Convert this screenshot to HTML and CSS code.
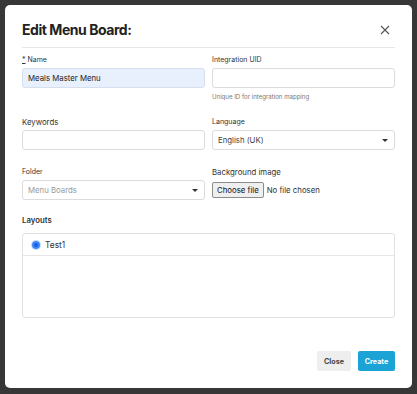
FILE: index.html
```html
<!DOCTYPE html>
<html lang="en">
<head>
<meta charset="utf-8">
<title>Edit Menu Board</title>
<link rel="stylesheet" href="styles.css">
</head>
<body>
<div class="modal">
  <div class="modal-header">
    <h1 class="title">Edit Menu Board:</h1>
    <svg class="close-x" width="10" height="10" viewBox="0 0 10 10"><path d="M1 1L9 9M9 1L1 9" stroke="#555" stroke-width="1.1" fill="none"/></svg>
  </div>
  <form class="form">
    <div class="field">
      <label class="label"><span class="req">*</span> Name</label>
      <div class="input autofill">Meals Master Menu</div>
    </div>
    <div class="field">
      <label class="label">Integration UID</label>
      <div class="input"></div>
      <div class="help">Unique ID for integration mapping</div>
    </div>
    <div class="field">
      <label class="label label-lg">Keywords</label>
      <div class="input"></div>
    </div>
    <div class="field">
      <label class="label">Language</label>
      <div class="input select">English (UK)<span class="caret"></span></div>
    </div>
    <div class="field row3">
      <label class="label">Folder</label>
      <div class="input select placeholder">Menu Boards<span class="caret"></span></div>
    </div>
    <div class="field row3">
      <label class="label label-lg">Background image</label>
      <div class="file"><span class="file-btn">Choose file</span><span class="file-text">No file chosen</span></div>
    </div>
    <div class="field full">
      <label class="label label-lg label-bold">Layouts</label>
      <div class="layouts">
        <div class="layout-row"><span class="radio"></span><span class="layout-name">Test1</span></div>
      </div>
    </div>
  </form>
  <div class="footer">
    <button class="btn btn-close" type="button">Close</button>
    <button class="btn btn-create" type="button">Create</button>
  </div>
</div>
</body>
</html>
```

FILE: styles.css
```css
* { box-sizing: border-box; }
html, body { margin: 0; }
body {
  width: 417px;
  height: 394px;
  background: #373737;
  padding: 5px 5px 0 5px;
  font-family: Inter, "Noto Sans", sans-serif;
  color: #333;
  overflow: hidden;
}
.modal {
  width: 407px;
  height: 383px;
  background: #fff;
  border-radius: 5px;
  padding: 0 17px 17px 17px;
  display: flex;
  flex-direction: column;
}
.modal-header {
  display: flex;
  align-items: center;
  justify-content: space-between;
  padding: 15px 0 7px 0;
  border-bottom: 1px solid #e6e6e6;
}
.title {
  margin: 0;
  font-size: 14px;
  letter-spacing: -0.45px;
  line-height: 20px;
  font-weight: 700;
  color: #222;
}
.close-x { margin-right: 5px; }
.form {
  display: grid;
  grid-template-columns: 183px 183px;
  column-gap: 7px;
  row-gap: 14px;
  padding-top: 6px;
  align-items: start;
}
.field { display: flex; flex-direction: column; }
.row3 { margin-top: 2px; }
.full { grid-column: 1 / 3; }
.label {
  font-size: 7px;
  line-height: 12px;
  margin-bottom: 2px;
  color: #333;
}
.label-lg { font-size: 7.8px; }
.label-bold { font-weight: 600; }
.req { text-decoration: underline; }
.input {
  height: 20px;
  border: 1px solid #dcdcdc;
  border-radius: 3px;
  background: #fff;
  font-size: 7.8px;
  line-height: 18px;
  padding: 0 5px;
  color: #333;
  position: relative;
}
.autofill { background: #e8f0fe; border-color: #d6dff0; color: #222; }
.select { color: #444; }
.placeholder { color: #999; }
.caret {
  position: absolute;
  right: 6px;
  top: 8px;
  width: 0;
  height: 0;
  border-left: 3px solid transparent;
  border-right: 3px solid transparent;
  border-top: 3px solid #333;
}
.help {
  margin-top: 4px;
  font-size: 6.1px;
  line-height: 10px;
  color: #777;
}
.file {
  display: flex;
  align-items: center;
  height: 17px;
  margin-top: 1px;
}
.file-btn {
  height: 16px;
  padding: 0 4px;
  border: 1px solid #8c8c8c;
  border-radius: 2px;
  background: #efefef;
  font-size: 7.8px;
  line-height: 14px;
  color: #111;
}
.file-text {
  margin-left: 3px;
  font-size: 7.8px;
  color: #333;
}
.layouts {
  margin-top: 5px;
  height: 85px;
  border: 1px solid #e2e2e2;
  border-radius: 3px;
}
.layout-row {
  height: 22px;
  border-bottom: 1px solid #e6e6e6;
  display: flex;
  align-items: center;
  padding-left: 9px;
}
.radio {
  width: 8px;
  height: 8px;
  border-radius: 50%;
  background: radial-gradient(circle, #1c62dc 0 1.8px, #3a86f6 2.2px);
  box-shadow: 0 0 0 1px #c3dafc;
}
.layout-name {
  margin-left: 5px;
  font-size: 8.4px;
  color: #333;
}
.footer {
  margin-top: auto;
  display: flex;
  justify-content: flex-end;
  gap: 7px;
}
.btn {
  height: 20px;
  border: none;
  border-radius: 2px;
  font-family: inherit;
  font-size: 7.2px;
  font-weight: 700;
  padding: 0;
  cursor: pointer;
}
.btn-close { background: #eeeeee; color: #444; width: 34px; }
.btn-create { background: #1ba3d6; color: #fff; width: 37px; }
```
